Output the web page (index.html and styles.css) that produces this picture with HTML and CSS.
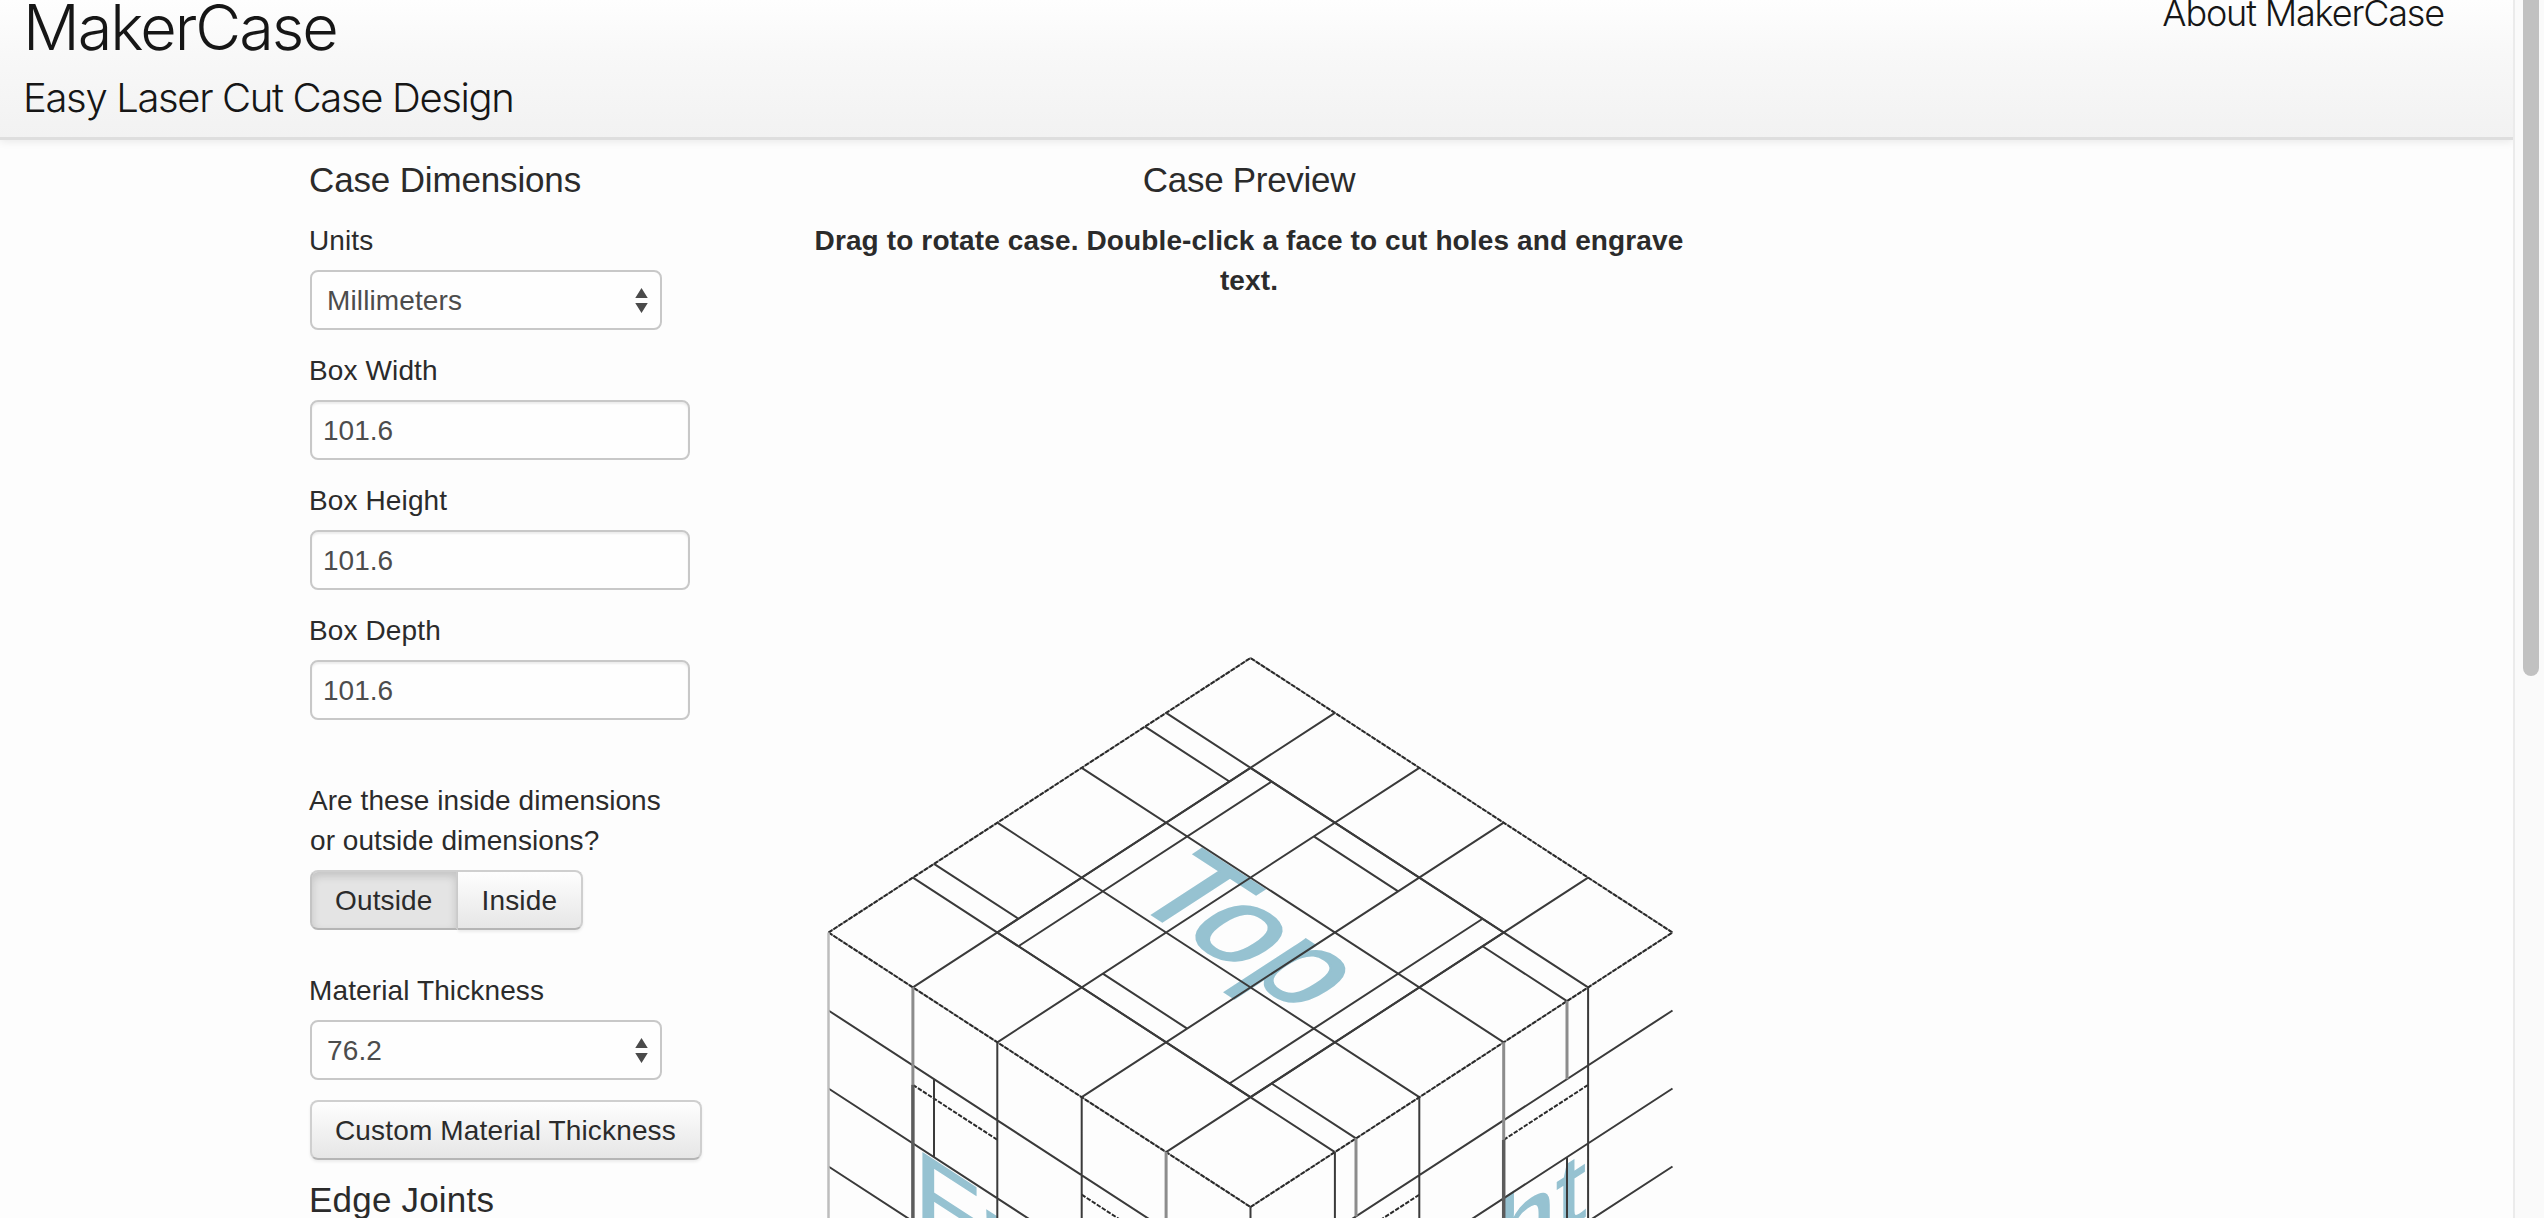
FILE: index.html
```html
<!DOCTYPE html>
<html lang="en">
<head>
<meta charset="utf-8">
<title>MakerCase</title>
<link rel="stylesheet" href="styles.css">
</head>
<body>
<div class="page">
  <header class="masthead">
    <div class="brand">
      <h1 class="brand-name">MakerCase</h1>
      <p class="brand-tag">Easy Laser Cut Case Design</p>
    </div>
    <a class="about">About MakerCase</a>
  </header>
  <main class="content">
    <form class="settings">
      <h4 class="heading">Case Dimensions</h4>
      <label class="label">Units</label>
      <div class="select"><span>Millimeters</span><svg class="arrows" viewBox="0 0 12 24"><path d="M0 9.500 6 0l6 9.500zM0 14.500h12L6 24z"/></svg></div>
      <label class="label">Box Width</label>
      <div class="input">101.6</div>
      <label class="label">Box Height</label>
      <div class="input">101.6</div>
      <label class="label">Box Depth</label>
      <div class="input">101.6</div>
      <p class="question">Are these inside dimensions<br>or outside dimensions?</p>
      <div class="group"><span class="btn active">Outside</span><span class="btn">Inside</span></div>
      <label class="label">Material Thickness</label>
      <div class="select"><span>76.2</span><svg class="arrows" viewBox="0 0 12 24"><path d="M0 9.500 6 0l6 9.500zM0 14.500h12L6 24z"/></svg></div>
      <span class="btn custom">Custom Material Thickness</span>
      <h4 class="heading joints">Edge Joints</h4>
    </form>
    <section class="preview">
      <h4 class="heading">Case Preview</h4>
      <p class="hint">Drag to rotate case. Double-click a face to cut holes and engrave text.</p>
      <svg class="case" viewBox="799.500 300.500 900 918">
        <!-- Each face uses a 5 x 5 grid; a grid unit is 20. -->
        <g transform="matrix(4.22 2.745 -4.22 2.745 1250 658.500)">
          <text class="face" x="49.500" y="58.500">Top</text>
          <path class="base" d="M0 100V0H100"/>
          <path class="edge" d="M0 100V0H100"/>
          <path class="cut" d="M0 20H100M0 40H100M0 60H100M0 80H100M0 25H20M40 25H60M80 25H100M0 75H20M40 75H60M80 75H100M20 0V100M40 0V100M60 0V100M80 0V100M25 20V80M75 20V80"/>
          <path class="cut" d="M20 20V80M80 20V80M20 20H80M20 80H80"/>
        </g>
        <g transform="matrix(4.22 2.745 0 3.900 828 933)">
          <text class="face side" x="50" y="58.300">Front</text>
          <path class="base" d="M0 0H100"/>
          <path class="edge" d="M0 0H100"/>
          <path class="rough" d="M20 25H40M60 25H80"/>
          <path class="cut" d="M0 20H100M0 40H100M0 60H100M0 80H100M25 20V40M40 0V80M60 0V80"/>
          <path class="cut" d="M100 0V80"/>
          <path class="thick" d="M20 0V25M80 0V80"/>
          <path class="heavy" d="M20 25V80"/>
          <path class="faint" d="M0 0V80"/>
        </g>
        <g transform="matrix(4.22 -2.745 0 3.900 1250 1207.500)">
          <text class="face side" x="49.800" y="58.300">Right</text>
          <path class="base" d="M0 0H100"/>
          <path class="edge" d="M0 0H100"/>
          <path class="rough" d="M20 25H40M60 25H80"/>
          <path class="cut" d="M0 20H100M0 40H100M0 60H100M0 80H100M20 0V100M40 0V80M80 0V100M75 40V100"/>
          <path class="thick" d="M25 0V20M60 0V25M75 0V20"/>
          <path class="heavy" d="M60 25V80"/>
        </g>
      </svg>
    </section>
  </main>
</div>
<div class="scrollbar"><div class="thumb"></div></div>
</body>
</html>
```
FILE: styles.css
```css
* { box-sizing: border-box; }
body {
  margin: 0;
  height: 1218px;
  overflow: hidden;
  display: flex;
  background: #fdfdfd;
  color: #2b2b2b;
  font: 28px/40px "Liberation Sans", Arial, sans-serif;
}
h1, h4, p { margin: 0; font-weight: normal; }
.page { flex: 1; height: 1218px; overflow: hidden; }
.masthead {
  height: 140px;
  display: flex;
  justify-content: space-between;
  padding: 0 69px 0 23px;
  background: linear-gradient(#fefefe, #f8f8f8 40%, #f2f2f2);
  border-bottom: 3px solid #dedede;
  box-shadow: 0 2px 8px rgba(0, 0, 0, .08);
  color: #161616;
  font-family: Inter, "Liberation Sans", sans-serif;
  font-weight: 300;
}
.brand-name { font-size: 63px; line-height: 55px; font-weight: 300; letter-spacing: -2px; }
.brand-tag { margin-top: 22px; font-size: 40px; line-height: 42px; font-weight: 300; letter-spacing: -1.35px; }
.about { font-size: 36px; line-height: 27px; letter-spacing: -1.15px; }
.content { display: flex; align-items: flex-start; padding-top: 20px; }
.settings { width: 490px; margin-left: 310px; }
.heading { font-size: 35px; line-height: 40px; margin-bottom: 20px; letter-spacing: -.15px; text-indent: -1px; white-space: nowrap; }
.joints { letter-spacing: .2px; }
.label { display: block; padding-top: 1px; margin-bottom: 9px; text-indent: -1px; letter-spacing: .12px; white-space: nowrap; }
.input, .select {
  height: 60px;
  margin-bottom: 20px;
  border: 2px solid #c8c8c8;
  border-radius: 8px;
  background: #fefefe;
  color: #4c4c4c;
  line-height: 57px;
}
.input { width: 380px; padding: 0 11px; box-shadow: inset 0 2px 2px rgba(0, 0, 0, .07); }
.select { width: 352px; padding: 0 12px 0 15px; display: flex; align-items: center; justify-content: space-between; letter-spacing: .12px; }
.arrows { width: 13px; height: 25px; fill: #4a4a4a; }
.question { margin: 60px 0 9px; padding-top: 1px; text-indent: -1px; letter-spacing: .06px; white-space: nowrap; }
.group { display: flex; width: max-content; margin-bottom: 40px; }
.btn {
  display: block;
  width: max-content;
  height: 60px;
  padding: 0 24px 0 23px;
  border: 2px solid #cfcfcf;
  border-bottom-color: #b5b5b5;
  border-radius: 8px;
  background: linear-gradient(#fefefe, #e6e6e6);
  box-shadow: 0 2px 3px rgba(0, 0, 0, .07);
  line-height: 57px;
  letter-spacing: .15px;
  white-space: nowrap;
}
.group .btn { padding: 0 24px; border-radius: 0 8px 8px 0; border-left: 0; }
.group .active {
  padding: 0 23px;
  border-left: 2px solid #c4c4c4;
  border-radius: 8px 0 0 8px;
  background: #e4e4e4;
  box-shadow: inset 0 4px 8px rgba(0, 0, 0, .15);
}
.custom { margin-bottom: 20px; }
.preview { width: 900px; text-align: center; }
.preview .heading { letter-spacing: -.3px; text-indent: -2px; }
.hint { font-weight: bold; padding: 1px 11px 0 9px; margin-bottom: -1px; letter-spacing: .13px; }
.case { display: block; width: 900px; height: 918px; }
.case path { fill: none; vector-effect: non-scaling-stroke; stroke: #3a3a3a; stroke-width: 2px; }
.case .base { stroke: #858585; stroke-width: 1.5px; }
.case .edge, .case .rough { stroke: #2a2a2a; stroke-dasharray: 4.5px 1.5px; }
.case .thick { stroke: #8c8c8c; stroke-width: 3px; }
.case .heavy { stroke: #5c5c5c; stroke-width: 3.5px; }
.case .faint { stroke: #bdbdbd; stroke-width: 2.5px; }
.face {
  font: 26.200px "Liberation Sans", Arial, sans-serif;
  fill: #96c2d1;
  stroke: #96c2d1;
  stroke-width: .4px;
  text-anchor: middle;
}
.side { font-size: 25.400px; }
.scrollbar { width: 31px; height: 1218px; padding-left: 8px; border-left: 2px solid #ebebeb; background: #fafafa; }
.thumb { width: 16px; height: 676px; border-radius: 0 0 8px 8px; background: #c1c1c1; }
```
